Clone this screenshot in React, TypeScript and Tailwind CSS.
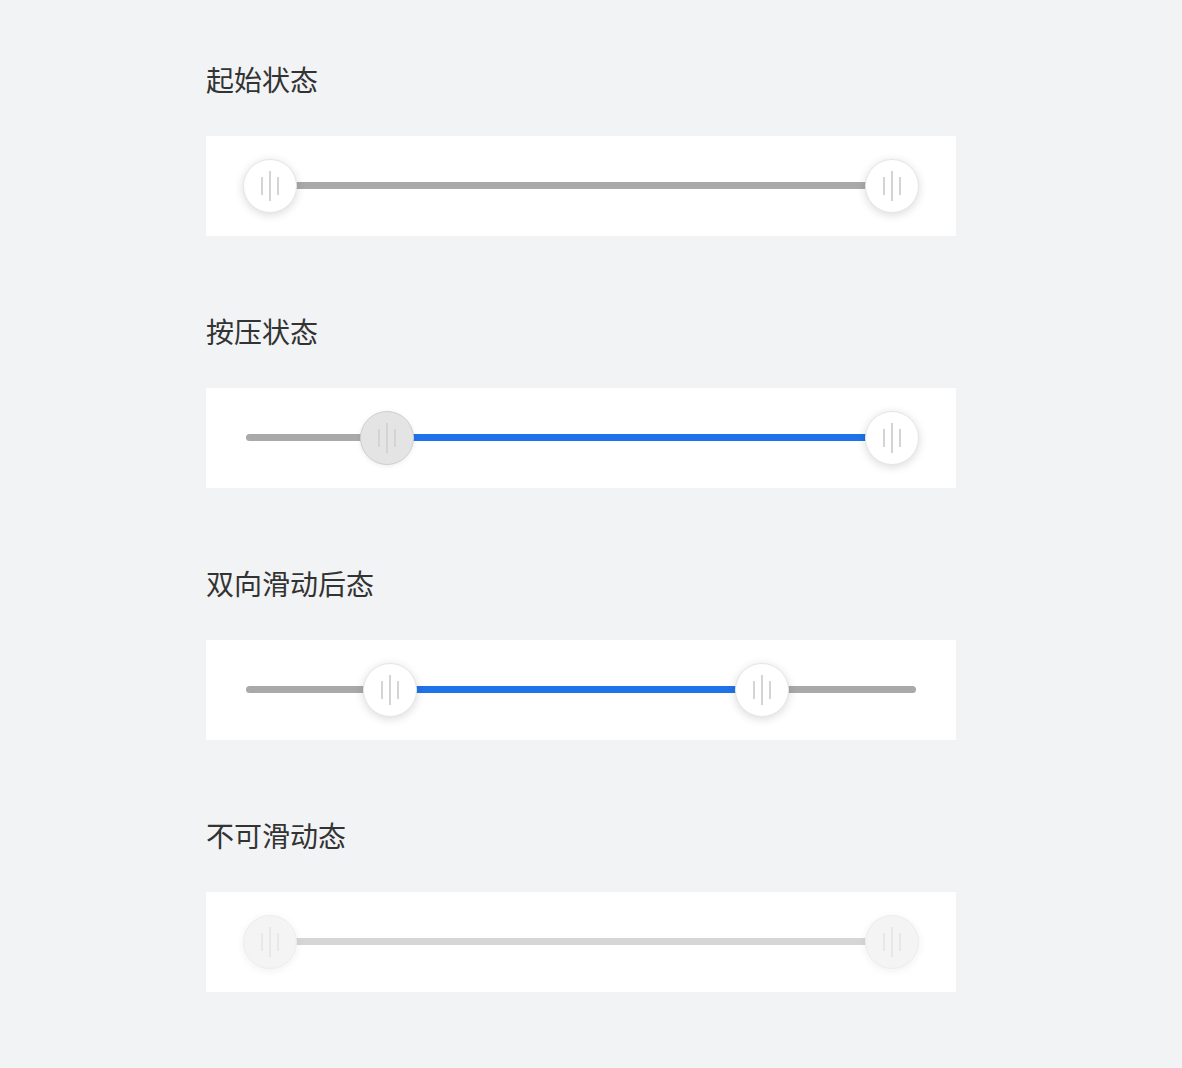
import React from "react";

type Knob = { at: number; pressed?: boolean };

type Row = {
  label: string;
  knobs: Knob[];
  fill?: [number, number];
  disabled?: boolean;
};

// knob centres in px inside the 670px track area
const ROWS: Row[] = [
  { label: "起始状态", knobs: [{ at: 24 }, { at: 646 }] },
  {
    label: "按压状态",
    knobs: [{ at: 141, pressed: true }, { at: 646 }],
    fill: [141, 646],
  },
  {
    label: "双向滑动后态",
    knobs: [{ at: 144 }, { at: 516 }],
    fill: [144, 516],
  },
  { label: "不可滑动态", knobs: [{ at: 24 }, { at: 646 }], disabled: true },
];

const Grip = ({ disabled }: { disabled?: boolean }) => {
  const c = disabled ? "bg-[#e8e8e8]" : "bg-[#d4d4d4]";
  return (
    <div className="flex items-center gap-[6px]">
      <span className={`h-[18px] w-[2px] ${c}`} />
      <span className={`h-[30px] w-[2px] ${c}`} />
      <span className={`h-[18px] w-[2px] ${c}`} />
    </div>
  );
};

const Slider = ({ row }: { row: Row }) => {
  return (
    <div className="flex h-[100px] w-[750px] items-center bg-white px-10">
      <div className="relative h-[54px] w-full">
        <div
          className={`absolute left-0 right-0 top-[23px] h-[7px] rounded-full ${
            row.disabled ? "bg-[#d6d6d6]" : "bg-[#a9a9a9]"
          }`}
        />
        {row.fill && (
          <div
            className="absolute top-[23px] h-[7px] bg-[#1f73e8]"
            style={{ left: row.fill[0], width: row.fill[1] - row.fill[0] }}
          />
        )}
        {row.knobs.map((k, i) => (
          <div
            key={i}
            className={`absolute top-0 flex h-[54px] w-[54px] items-center justify-center rounded-full border ${
              k.pressed
                ? "border-[#cfcfcf] bg-[#e4e4e4] shadow-[0_1px_5px_rgba(0,0,0,0.08)]"
                : row.disabled
                  ? "border-[#ededed] bg-[#f4f4f4] shadow-[0_2px_10px_rgba(0,0,0,0.06)]"
                  : "border-[#e6e6e6] bg-white shadow-[0_2px_10px_rgba(0,0,0,0.15)]"
            }`}
            style={{ left: k.at - 27 }}
          >
            <Grip disabled={row.disabled} />
          </div>
        ))}
      </div>
    </div>
  );
};

export default function App() {
  return (
    <div className="min-h-screen bg-[#f2f3f5] pl-[206px] pt-[59px] font-['Noto_Sans_CJK_SC','Noto_Sans',sans-serif]">
      <div className="flex flex-col gap-[75px]">
        {ROWS.map((row) => (
          <section key={row.label} className="flex flex-col gap-[37px]">
            <h2 className="h-10 text-[28px] leading-10 text-[#333333]">
              {row.label}
            </h2>
            <Slider row={row} />
          </section>
        ))}
      </div>
    </div>
  );
}
